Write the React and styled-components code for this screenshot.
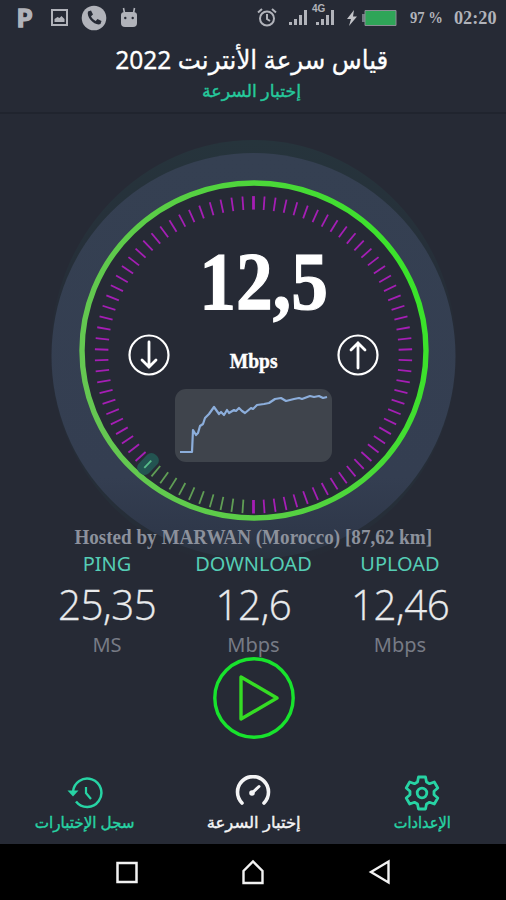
import React from "react";
import styled, { createGlobalStyle } from "styled-components";

const GlobalStyle = createGlobalStyle`
  * {
    box-sizing: border-box;
  }
  body {
    margin: 0;
    background: #262a35;
  }
`;

const Screen = styled.div`
  display: flex;
  flex-direction: column;
  width: 506px;
  height: 900px;
  overflow: hidden;
  background: #262a35;
  color: #fff;
  font-family: "Noto Sans", "DejaVu Sans", sans-serif;
`;

const StatusBar = styled.div`
  display: flex;
  justify-content: space-between;
  height: 35px;
  padding: 0 9px 0 17px;
  color: #b1b3ba;
`;

const StatusGroup = styled.div`
  display: flex;
  align-items: center;
  gap: ${(props) => props.$gap}px;
  margin-left: ${(props) => props.$left || 0}px;
`;

const Brand = styled.span`
  width: 17px;
  font: 900 24px/36px "Lato", sans-serif;
  -webkit-text-stroke: 1.5px #b1b3ba;
`;

const PhoneIcon = styled.svg`
  margin: 0 -4px;
`;

const BatteryIcon = styled.svg`
  margin-left: 12px;
`;

const SignalBox = styled.div`
  position: relative;
  display: flex;
`;

const NetworkType = styled.span`
  position: absolute;
  top: -5px;
  left: -4px;
  font: bold 10px/10px "Liberation Sans", sans-serif;
`;

const StatusText = styled.span`
  width: ${(props) => props.$width}px;
  margin-left: ${(props) => props.$left}px;
  white-space: nowrap;
  font: bold ${(props) => props.$size}px/36px "Liberation Serif", serif;
  transform: scaleX(${(props) => props.$stretch});
  transform-origin: left;
`;

const Header = styled.header`
  display: flex;
  flex-direction: column;
  align-items: center;
  height: 79px;
  padding: 7px 3px 0 0;
  border-bottom: 2px solid #20242e;
`;

const Title = styled.h1`
  margin: 0;
  direction: rtl;
  white-space: nowrap;
  font-size: 26px;
  font-weight: 400;
  line-height: 34px;
  -webkit-text-stroke: 0.3px #fff;
  transform: scaleX(0.943);
`;

const Subtitle = styled.div`
  direction: rtl;
  color: #25c99c;
  font-size: 17px;
  line-height: 29px;
  -webkit-text-stroke: 0.4px #25c99c;
  transform: scaleX(1.02);
`;

const Main = styled.main`
  position: relative;
  display: flex;
  flex-direction: column;
  align-items: center;
  height: 642px;
`;

const Dial = styled.svg`
  position: absolute;
  top: 0;
  left: 0;
`;

const Reading = styled.div`
  position: relative;
  display: flex;
  flex-direction: column;
  align-items: center;
  width: 250px;
  height: 409px;
  padding-top: 121px;
`;

const Speed = styled.div`
  margin-left: 22px;
  font: bold 83px/92px "Liberation Serif", serif;
  -webkit-text-stroke: 1.2px #fff;
  transform: scaleX(0.885);
`;

const UnitRow = styled.div`
  display: flex;
  align-items: center;
  justify-content: space-between;
  width: 252px;
  height: 54px;
  margin: 1px 0 0 1px;
`;

const Unit = styled.span`
  padding-top: 12px;
  font: bold 21px/24px "Liberation Serif", serif;
  -webkit-text-stroke: 0.4px #fff;
  transform: scaleX(0.93);
`;

const Chart = styled.div`
  width: 157px;
  height: 73px;
  margin-top: 7px;
  border-radius: 11px;
  background: #3f444c;
`;

const Host = styled.div`
  position: relative;
  white-space: nowrap;
  color: #8c919c;
  font: bold 20px/28px "Liberation Serif", serif;
  transform: scaleX(0.955);
`;

const Results = styled.div`
  position: relative;
  display: grid;
  grid-template-columns: repeat(3, 146.5px);
  height: 106px;
  margin-left: 1px;
`;

const Result = styled.div`
  display: flex;
  flex-direction: column;
  align-items: center;
`;

const Label = styled.div`
  color: #55cdb5;
  font-size: 20px;
  line-height: 25px;
`;

const Value = styled.div`
  color: #e9eaec;
  font-family: "Open Sans", "Noto Sans", sans-serif;
  font-size: 42px;
  font-weight: 300;
  line-height: 56px;
  letter-spacing: -0.5px;
  -webkit-text-stroke: 0.3px #e9eaec;
  transform: scaleX(0.96);
`;

const Small = styled.div`
  color: #777b85;
  font-size: 20px;
  line-height: 25px;
`;

const PlayButton = styled.button`
  position: relative;
  display: flex;
  width: 82px;
  height: 82px;
  margin-left: 2px;
  padding: 0;
  border: 0;
  background: none;
`;

const Tabs = styled.nav`
  display: grid;
  grid-template-columns: repeat(3, 1fr);
  height: 88px;
`;

const Tab = styled.div`
  display: flex;
  flex-direction: column;
  align-items: center;
  padding: 19px 0 0 1px;
  color: ${(props) => (props.$active ? "#f4f4f5" : "#27d3a4")};
`;

const TabLabel = styled.span`
  direction: rtl;
  white-space: nowrap;
  font-size: 16px;
  line-height: 22px;
  -webkit-text-stroke: 0.4px currentColor;
  transform: scaleX(${(props) => props.$stretch});
`;

const SystemBar = styled.div`
  display: grid;
  grid-template-columns: repeat(3, 126.5px);
  justify-content: center;
  align-items: center;
  justify-items: center;
  height: 56px;
  background: #000;
`;

const results = [
  { label: "PING", value: "25,35", unit: "MS" },
  { label: "DOWNLOAD", value: "12,6", unit: "Mbps" },
  { label: "UPLOAD", value: "12,46", unit: "Mbps" },
];

// ticks go clockwise from the bottom, 4 degrees apart
const ticks = Array.from({ length: 90 }, (_, i) => i);

const tickColor = (i) => {
  if (i === 11) return "#58bd8a";
  return i > 0 && i < 11 ? "#609e55" : "#a51eb5";
};

const Gauge = () => (
  <Dial width="506" height="460" viewBox="0 114 506 460">
    <defs>
      <linearGradient id="disc" x1="0" y1="0" x2="0" y2="1">
        <stop offset="0" stopColor="#354052" />
        <stop offset="0.8" stopColor="#343e51" />
        <stop offset="0.93" stopColor="#2f384a" />
        <stop offset="1" stopColor="#29313d" />
      </linearGradient>
      <linearGradient id="halo" x1="0" y1="0" x2="0" y2="1">
        <stop offset="0" stopColor="#26343c" />
        <stop offset="0.3" stopColor="#262f39" />
        <stop offset="0.5" stopColor="#262a35" />
        <stop offset="0.85" stopColor="#262f39" />
        <stop offset="1" stopColor="#262a35" />
      </linearGradient>
      <linearGradient id="ring" x1="0" y1="0.7" x2="1" y2="0.4">
        <stop offset="0" stopColor="#66c653" />
        <stop offset="0.45" stopColor="#57d043" />
        <stop offset="1" stopColor="#3ae32a" />
      </linearGradient>
    </defs>
    <ellipse cx="253.5" cy="353" rx="203" ry="213" fill="url(#halo)" />
    <ellipse cx="253.5" cy="356" rx="202" ry="203" fill="url(#disc)" />
    <ellipse
      cx="254"
      cy="350.5"
      rx="172"
      ry="167.5"
      fill="#262a35"
      stroke="url(#ring)"
      strokeWidth="5.4"
    />
    <rect
      x="-7"
      y="-12"
      width="14"
      height="24"
      rx="6"
      fill="#235451"
      transform="translate(148 464) rotate(44)"
    />
    {ticks.map((i) => (
      <line
        key={i}
        x1="253.5"
        x2="253.5"
        y1={i === 11 ? 502 : 500}
        y2={i === 11 ? 512 : 513.5}
        stroke={tickColor(i)}
        strokeWidth={i % 45 === 0 ? 2.8 : 1.8}
        transform={`rotate(${i * 4} 253.5 354.8)`}
      />
    ))}
  </Dial>
);

const ArrowIcon = ({ up }) => (
  <svg width="42" height="42" viewBox="0 0 42 42" fill="none" stroke="#fff" strokeWidth="2.2">
    <circle cx="21" cy="21" r="19.5" />
    <path
      d={up ? "M21 34V9M14 16l7-7 7 7" : "M21 8v25M14 26l7 7 7-7"}
      strokeWidth="2.8"
      strokeLinecap="round"
    />
  </svg>
);

const Bars = () => (
  <svg width="19" height="17" viewBox="0 0 19 17" fill="currentColor">
    <path d="M0 13h3v3H0zM5 10h3v6H5zM10 6h3v10h-3zM15 1h3v15h-3z" />
  </svg>
);

const App = () => {
  return (
    <>
      <GlobalStyle />
      <Screen>
        <StatusBar>
          <StatusGroup $gap={17}>
            <Brand>P</Brand>
            <svg width="17" height="17" viewBox="0 0 17 17">
              <path d="M1 1h15v15H1z" fill="none" stroke="currentColor" strokeWidth="2" />
              <path d="M3.5 13V10l3-2 2 1 2-2 3 3v3z" fill="currentColor" />
            </svg>
            <PhoneIcon width="26" height="26" viewBox="0 0 26 26">
              <circle cx="13" cy="13" r="12.3" fill="currentColor" />
              <path
                d="M7 6.5l3-1 2 4-2 1.8c1 2.2 2.5 3.7 4.7 4.7l1.8-2 4 2-1 3c-5 2.500-14.500-6.500-12.500-12.500z"
                fill="#262a35"
              />
            </PhoneIcon>
            <svg width="18" height="21" viewBox="0 0 18 21">
              <path d="M4.500 6L3.500 1M13.500 6l1-5" stroke="currentColor" strokeWidth="1.6" />
              <path d="M1 8q0-3 4-3h8q4 0 4 3v8q0 4-4 4H5q-4 0-4-4z" fill="currentColor" />
              <circle cx="5.3" cy="11" r="1.2" fill="#262a35" />
              <circle cx="12.7" cy="11" r="1.2" fill="#262a35" />
            </svg>
          </StatusGroup>
          <StatusGroup $gap={0}>
            <svg width="20" height="20" viewBox="0 0 20 20" fill="none" stroke="currentColor" strokeWidth="2">
              <circle cx="10" cy="10.5" r="7" />
              <path d="M1 4.5L5 1M19 4.5L15 1M10 6v5l3 2" />
            </svg>
            <StatusGroup $gap={8} $left={12}>
              <Bars />
              <SignalBox>
                <Bars />
                <NetworkType>4G</NetworkType>
              </SignalBox>
            </StatusGroup>
            <BatteryIcon width="52" height="18" viewBox="0 0 52 18">
              <path d="M7 1L0 10h4L2 17l8-9.5H6z" fill="#c3c4c9" />
              <path d="M15 5h3v8h-3z" fill="#777b85" />
              <path d="M18 1.500h31v15H18z" fill="#2fa558" stroke="#8b8e96" />
            </BatteryIcon>
            <StatusText $width={33} $left={11} $size={17} $stretch={0.86}>
              97 %
            </StatusText>
            <StatusText $width={43} $left={11} $size={19} $stretch={0.96}>
              02:20
            </StatusText>
          </StatusGroup>
        </StatusBar>

        <Header>
          <Title>قياس سرعة الأنترنت 2022</Title>
          <Subtitle>إختبار السرعة</Subtitle>
        </Header>

        <Main>
          <Gauge />
          <Reading>
            <Speed>12,5</Speed>
            <UnitRow>
              <ArrowIcon />
              <Unit>Mbps</Unit>
              <ArrowIcon up />
            </UnitRow>
            <Chart>
              <svg width="157" height="73" viewBox="175 389 157 73">
                <path
                  d="M180 452h12l1-22 3 5 2-2 2-7 3-2 2-6 4-4 5-7 5 7 2-2 3 3 3-5 2 3 5-3 2 1 3-3 3 3 3 2 6-5 2 1 4-4 7-1 5-1 6-4 6-1 5 3 8-2 5-1 3 1 8-3 4 1 5-1 4 2 4-1"
                  fill="none"
                  stroke="#8caedb"
                  strokeWidth="2.2"
                  strokeLinejoin="round"
                />
              </svg>
            </Chart>
          </Reading>
          <Host>Hosted by MARWAN (Morocco) [87,62 km]</Host>
          <Results>
            {results.map((item) => (
              <Result key={item.label}>
                <Label>{item.label}</Label>
                <Value>{item.value}</Value>
                <Small>{item.unit}</Small>
              </Result>
            ))}
          </Results>
          <PlayButton>
            <svg width="82" height="82" viewBox="0 0 82 82" fill="none">
              <circle cx="41" cy="41" r="39.2" stroke="#18e32d" strokeWidth="3.4" />
              <path d="M28 20v42l36-21z" stroke="#35dc24" strokeWidth="3.4" strokeLinejoin="round" />
            </svg>
          </PlayButton>
        </Main>

        <Tabs>
          <Tab>
            <svg width="36" height="36" viewBox="67 776 36 36" fill="none" stroke="currentColor" strokeWidth="2.5">
              <path d="M73 793a14.200 14.200 0 1 1 3 9.500" />
              <path d="M67.500 791.500h11l-5.500 6z" fill="currentColor" stroke="none" />
              <path d="M86 788v6l5 6" strokeWidth="2.2" />
            </svg>
            <TabLabel $stretch={0.95}>سجل الإختبارات</TabLabel>
          </Tab>
          <Tab $active>
            <svg width="36" height="36" viewBox="236 776 36 36" fill="none" stroke="currentColor" strokeWidth="3.6" strokeLinecap="round">
              <path d="M243 804a15.500 15.500 0 1 1 22 0" />
              <path d="M253 794l7-6.500" strokeWidth="3" />
              <circle cx="253" cy="794" r="1" />
            </svg>
            <TabLabel $stretch={1.03}>إختبار السرعة</TabLabel>
          </Tab>
          <Tab>
            <svg width="36" height="36" viewBox="-18 -18 36 36" fill="none" stroke="currentColor" strokeWidth="2.8" strokeLinejoin="round">
              <path d="M-3.500-16h7l1 5 3 1.700 4.800-1.700 3.500 6-3.800 3.300v3.400l3.800 3.300-3.500 6-4.800-1.700-3 1.700-1 5h-7l-1-5-3-1.700-4.800 1.700-3.500-6 3.800-3.300v-3.400l-3.800-3.300 3.500-6 4.800 1.700 3-1.700z" />
              <circle r="4.800" />
            </svg>
            <TabLabel $stretch={0.91}>الإعدادات</TabLabel>
          </Tab>
        </Tabs>

        <SystemBar>
          <svg width="24" height="24" viewBox="0 0 24 24" fill="none" stroke="#f2f2f2" strokeWidth="2.5">
            <path d="M2.500 3h19v19h-19z" />
          </svg>
          <svg width="24" height="26" viewBox="0 0 24 26" fill="none" stroke="#f2f2f2" strokeWidth="2.4">
            <path d="M2.500 24V12L12 2.500l9.500 9.500v12z" />
          </svg>
          <svg width="24" height="26" viewBox="0 0 24 26" fill="none" stroke="#f2f2f2" strokeWidth="2.4">
            <path d="M20.500 2.500v21L3 13z" />
          </svg>
        </SystemBar>
      </Screen>
    </>
  );
};

export default App;
